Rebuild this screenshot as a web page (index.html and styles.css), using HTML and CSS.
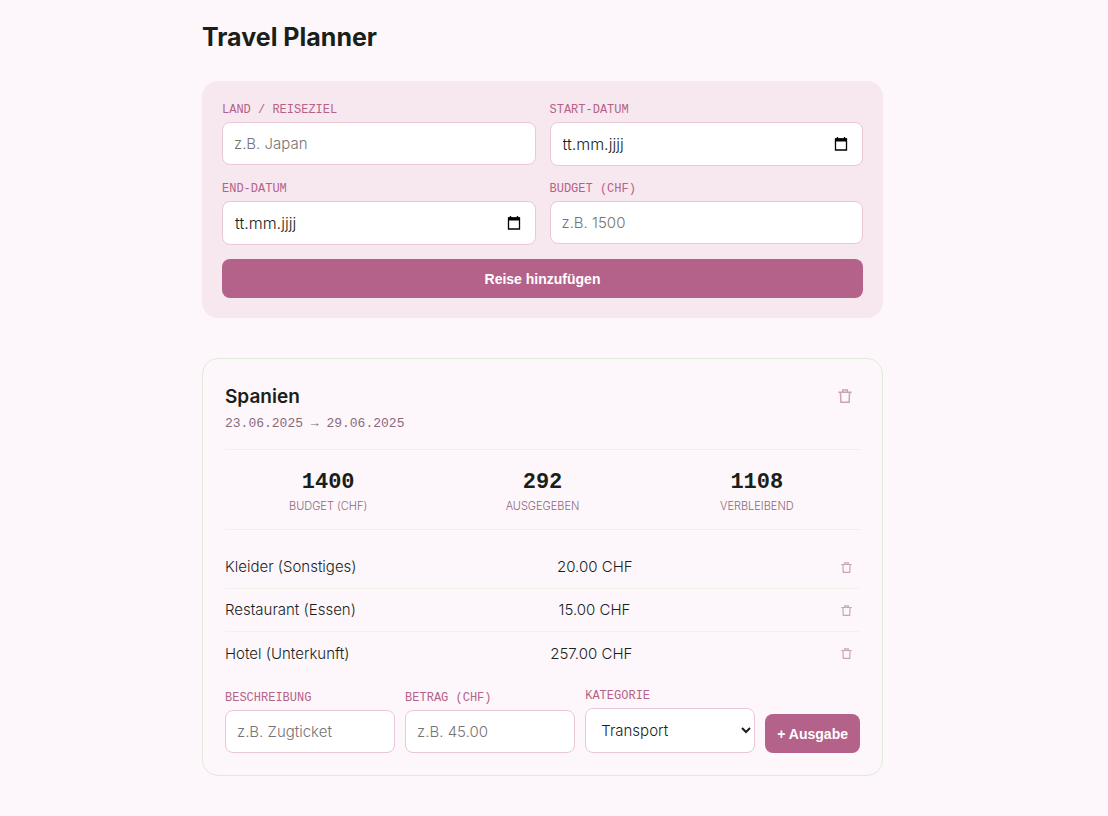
FILE: index.html
```html
<!DOCTYPE html>
<html lang="de">
<head>
  <meta charset="UTF-8" />
  <meta name="viewport" content="width=device-width, initial-scale=1.0"/>
  <title>Travel Planner</title>
  <link rel="stylesheet" href="styles.css">
</head>
<body>

  <svg class="sprite" aria-hidden="true">
    <symbol id="trash" viewBox="0 0 14 14">
      <path d="M0.3 3.2h13.4M4.7 3V1h4.6v2M2.4 3.2l0.5 10h8.2l0.5-10" fill="none" stroke="currentColor" stroke-width="1.5"/>
    </symbol>
    <symbol id="calendar" viewBox="0 0 14 14">
      <path d="M1.5 2h11v11h-11zM3.5 0v2M10.5 0v2" fill="none" stroke="currentColor" stroke-width="1.3"/>
      <path d="M1 1.5h12v3H1z" fill="currentColor"/>
    </symbol>
  </svg>

  <main>
    <h1>Travel Planner</h1>

    <form class="trip-form">
      <div class="field">
        <label for="country">Land / Reiseziel</label>
        <input type="text" id="country" placeholder="z.B. Japan">
      </div>
      <div class="field">
        <label for="start">Start-Datum</label>
        <div class="date-box">
          <input type="text" id="start" placeholder="tt.mm.jjjj">
          <svg class="calendar"><use href="#calendar"/></svg>
        </div>
      </div>
      <div class="field">
        <label for="end">End-Datum</label>
        <div class="date-box">
          <input type="text" id="end" placeholder="tt.mm.jjjj">
          <svg class="calendar"><use href="#calendar"/></svg>
        </div>
      </div>
      <div class="field">
        <label for="budget">Budget (CHF)</label>
        <input type="text" inputmode="decimal" id="budget" placeholder="z.B. 1500">
      </div>
      <button type="button" class="btn">Reise hinzufügen</button>
    </form>

    <section class="trip-card">
      <header class="trip-header">
        <div>
          <h2>Spanien</h2>
          <p class="dates">23.06.2025 → 29.06.2025</p>
        </div>
        <button type="button" class="delete" aria-label="Reise löschen"><svg><use href="#trash"/></svg></button>
      </header>

      <div class="stats">
        <div><strong>1400</strong><span>Budget (CHF)</span></div>
        <div><strong>292</strong><span>Ausgegeben</span></div>
        <div><strong>1108</strong><span>Verbleibend</span></div>
      </div>

      <ul class="expenses">
        <li>
          <span>Kleider (Sonstiges)</span>
          <span>20.00 CHF</span>
          <button type="button" class="delete small" aria-label="Kleider löschen"><svg><use href="#trash"/></svg></button>
        </li>
        <li>
          <span>Restaurant (Essen)</span>
          <span>15.00 CHF</span>
          <button type="button" class="delete small" aria-label="Restaurant löschen"><svg><use href="#trash"/></svg></button>
        </li>
        <li>
          <span>Hotel (Unterkunft)</span>
          <span>257.00 CHF</span>
          <button type="button" class="delete small" aria-label="Hotel löschen"><svg><use href="#trash"/></svg></button>
        </li>
      </ul>

      <form class="expense-form">
        <div class="field">
          <label for="description">Beschreibung</label>
          <input type="text" id="description" placeholder="z.B. Zugticket">
        </div>
        <div class="field">
          <label for="amount">Betrag (CHF)</label>
          <input type="text" inputmode="decimal" id="amount" placeholder="z.B. 45.00">
        </div>
        <div class="field">
          <label for="category">Kategorie</label>
          <select id="category">
            <option>Transport</option>
            <option>Unterkunft</option>
            <option>Essen</option>
            <option>Sonstiges</option>
          </select>
        </div>
        <button type="button" class="btn">+ Ausgabe</button>
      </form>
    </section>
  </main>

</body>
</html>
```
FILE: styles.css
```css
* {
  box-sizing: border-box;
}
body {
  margin: 0;
  padding: 20px 43px 40px 20px;
  background: #fdf7fb;
  color: #1a1f1a;
  font-family: Inter, sans-serif;
  font-size: 15px;
  font-weight: 300;
  line-height: 22px;
}
.sprite {
  display: none;
}
main {
  max-width: 681px;
  margin: 0 auto;
}
h1 {
  margin: 0 0 27px;
  font-size: 25px;
  font-weight: 700;
  line-height: 34px;
}

/* forms */
.trip-form {
  display: grid;
  grid-template-columns: 1fr 1fr;
  align-items: start;
  gap: 14px;
  padding: 20px;
  margin-bottom: 40px;
  background: #f7e8ef;
  border-radius: 16px;
}
.trip-form .btn {
  grid-column: 1 / -1;
}
.field {
  display: flex;
  flex-direction: column;
  gap: 3px;
  min-width: 0;
}
label {
  color: #b5628a;
  font-family: "Liberation Mono", monospace;
  font-size: 12px;
  font-weight: 400;
  line-height: 18px;
  text-transform: uppercase;
}
input,
select {
  width: 100%;
  height: 43px;
  padding: 0 11px;
  border: 1px solid #e8c8d8;
  border-radius: 8px;
  background: #fff;
  color: #1a1f1a;
  font: inherit;
}
input::placeholder {
  color: #757575;
}
select {
  height: 45px;
}
.date-box {
  display: flex;
  align-items: center;
  height: 44px;
  padding-right: 14px;
  border: 1px solid #e8c8d8;
  border-radius: 8px;
  background: #fff;
}
.date-box input {
  height: 100%;
  padding: 0 12px;
  border: 0;
  background: none;
  font-size: 16px;
}
.date-box input::placeholder {
  color: #1a1f1a;
}
.calendar {
  flex: none;
  width: 14px;
  height: 14px;
  color: #000;
}
.btn {
  height: 39px;
  padding: 0 12px;
  border: 0;
  border-radius: 8px;
  background: #b5628a;
  color: #fff;
  font-family: "Liberation Sans", sans-serif;
  font-size: 14px;
  font-weight: 700;
  white-space: nowrap;
  cursor: pointer;
}

/* trip */
.trip-card {
  padding: 22px;
  border: 1px solid #e3e8dc;
  border-radius: 16px;
}
.trip-header {
  display: flex;
  justify-content: space-between;
  align-items: flex-start;
  padding-bottom: 14px;
}
h2 {
  margin: 0;
  font-size: 19px;
  font-weight: 600;
  line-height: 32px;
}
.dates {
  margin: 0;
  color: #8a6a7a;
  font-family: "Liberation Mono", monospace;
  font-size: 13px;
  font-weight: 400;
}
.delete {
  display: flex;
  padding: 8px;
  border: 0;
  background: none;
  color: #c9a3b6;
  cursor: pointer;
}
.delete svg {
  width: 14px;
  height: 14px;
}
.delete.small svg {
  width: 11px;
  height: 11px;
}
.stats {
  display: grid;
  grid-template-columns: repeat(3, 1fr);
  gap: 8px;
  padding: 18px 0 13px;
  border: solid #f3edf0;
  border-width: 1px 0;
  text-align: center;
}
.stats strong,
.stats span {
  display: block;
}
.stats strong {
  font-family: "Liberation Mono", monospace;
  font-size: 22px;
  font-weight: 700;
  line-height: 29px;
}
.stats span {
  color: #8a6a7a;
  font-size: 11px;
  line-height: 19px;
  text-transform: uppercase;
}
.expenses {
  margin: 16px 0 0;
  padding: 0;
  list-style: none;
}
.expenses li {
  display: flex;
  justify-content: space-between;
  align-items: center;
  height: 43px;
  border-bottom: 1px solid #f3f1ec;
}
.expenses li:last-child {
  border-bottom: 0;
}
.expense-form {
  display: grid;
  grid-template-columns: 1fr 1fr 1fr auto;
  align-items: end;
  gap: 10px;
  margin-top: 12px;
}
```
